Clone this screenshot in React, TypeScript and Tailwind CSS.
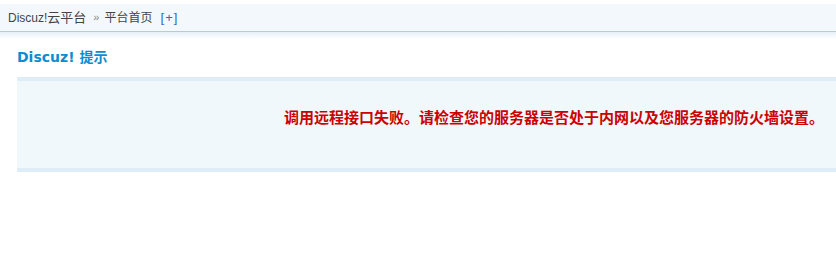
export default function App() {
  return (
    <div className="w-[836px] h-[278px] overflow-hidden bg-white" style={{ fontFamily: '"Liberation Sans", "Noto Sans CJK SC", sans-serif' }}>
      {/* breadcrumb bar */}
      <div className="pt-[4px]">
        <div className="h-[28px] bg-[#f2f8fc] border-b border-[#b8cad6] flex items-center pl-[8px] text-[12px] text-[#444]">
          <span>
            Discuz!<span className="text-[13px]">云平台</span>
          </span>
          <span className="ml-[7px] mr-[5px] text-[#888] text-[11px]">»</span>
          <span className="text-[12px]">平台首页</span>
          <span className="ml-[8px] text-[13px] text-[#3366cc]">
            [<span className="mx-[1px] text-[#5a5aa8]">+</span>]
          </span>
        </div>
        <div className="h-[7px] bg-gradient-to-b from-[#e6eff6] to-white" />
      </div>

      {/* notice */}
      <div className="pl-[17px]">
        <h3
          className="mt-[8px] h-[20px] leading-[20px] text-[14px] font-bold text-[#0b8dcf]"
          style={{ fontFamily: '"DejaVu Sans", "Noto Sans CJK SC", sans-serif' }}
        >
          Discuz! 提示
        </h3>
        <div className="mt-[10px] w-[1074px] border-y-4 border-[#deeef9] bg-[#f0f8fc] h-[95px] text-center pt-[26px]">
          <p className="text-[15px] leading-[20px] font-bold text-[#cc0000]" style={{ fontFamily: '"Noto Sans CJK SC", sans-serif' }}>
            调用远程接口失败。请检查您的服务器是否处于内网以及您服务器的防火墙设置。
          </p>
        </div>
      </div>
    </div>
  )
}
